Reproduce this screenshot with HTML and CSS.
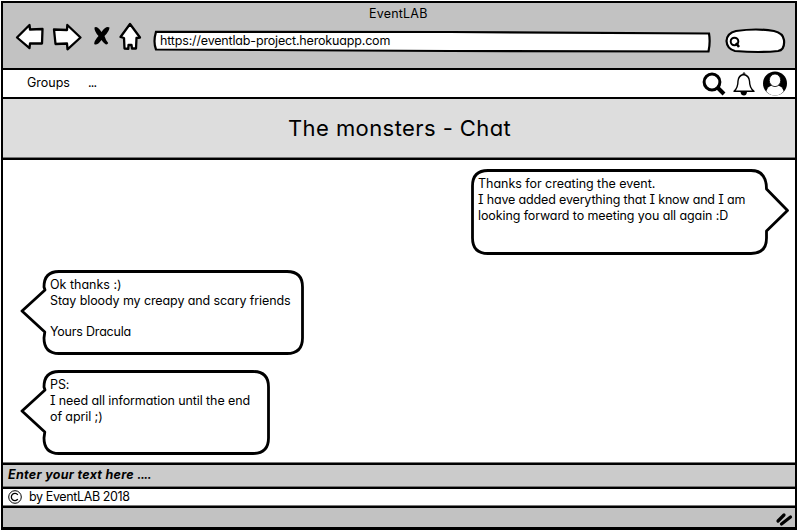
FILE: index.html
```html
<!DOCTYPE html>
<html lang="en">
<head>
<meta charset="utf-8">
<title>EventLAB</title>
<link rel="stylesheet" href="styles.css">
</head>
<body>
<div class="window">
  <header class="chrome">
    <div class="window-title"><span class="t-title">EventLAB</span></div>
    <div class="toolbar">
      <svg class="controls" width="130" height="32" viewBox="14 21 130 32">
        <g fill="#fff" stroke="#000" stroke-width="2.3" stroke-linejoin="round">
          <path d="M17 37.5L29.5 25L30 29.5L42.5 29L42 43.5L30 43.5L29.5 48.2Z"/>
          <path d="M54 29.5L67 30L67.3 25L80.500 37.500L67.5 49.300L67 43.500L55.500 44Z"/>
          <path d="M130 24L120.500 37L124 38L124.500 48.500L128.300 48.800L128.500 45L131.500 45L132 48.500L136 48.500L136.500 38L140 37.500Z"/>
        </g>
        <path d="M94.500 27.500Q97 25.500 101.500 32Q106 25.500 109.500 27.500Q109.500 31 104.500 36Q106 41 108.200 43Q106.500 47 101.500 40Q97 46 94.200 44Q94 41 98.500 36Q94 31 94.500 27.500Z"/>
      </svg>
      <div class="address">
        <svg class="outline" width="560" height="24" viewBox="152 30 560 24"><path d="M156 31.800L450 32L709 33.500Q710.500 42 708.500 51.500L450 51L156 49.500Q153 42 156 31.800Z" fill="#fff" stroke="#000" stroke-width="2.200"/></svg>
        <span class="t-url">https://eventlab-project.herokuapp.com</span>
      </div>
      <svg class="search" width="64" height="28" viewBox="724 27 64 28">
        <path d="M736 31Q757 28 774 31Q783 33 784 40Q785 50 778 51Q760 53 735 51Q727 49 726.500 41Q727 33 736 31Z" fill="#fff" stroke="#000" stroke-width="2.200"/>
        <circle cx="734.500" cy="41.500" r="3.800" fill="none" stroke="#000" stroke-width="2"/><path d="M736 43L739 47" stroke="#000" stroke-width="2.500"/>
      </svg>
    </div>
  </header>
  <nav class="menu">
    <span class="t-groups">Groups</span><span class="t-dots">...</span>
    <svg class="actions" width="90" height="27" viewBox="700 70 90 27">
      <g fill="none" stroke="#000">
        <circle cx="712" cy="82" r="7.900" stroke-width="3"/>
        <path d="M718 88L724 94" stroke-width="4"/>
        <path d="M734 91.300Q738 88 738 81Q738.500 75.500 743.500 74.500Q749 75.500 749.500 81Q749.500 88 754 91.300Z" stroke-width="1.400" stroke-linejoin="round"/>
        <circle cx="744" cy="73.500" r=".8"/>
      </g>
      <path d="M740.500 92H747Q746.500 95.500 744 95.500Q741 95.500 740.500 92Z"/>
      <circle cx="775" cy="83.500" r="12"/>
      <path d="M766.300 91.300Q768 86.300 772 85.500H778Q782 86.300 783.700 91.300A11 11 0 0 1 766.300 91.300Z" fill="#fff"/>
      <ellipse cx="775" cy="80.300" rx="5.700" ry="6.300" fill="#fff" stroke="#000" stroke-width=".8"/>
    </svg>
  </nav>
  <div class="heading"><h1><span class="t-heading">The monsters - Chat</span></h1></div>
  <main class="chat">
    <article class="message mine">
      <svg class="outline" width="320" height="88" viewBox="470 168 320 88"><path d="M488 170.500H751Q766.500 170.500 766.500 189L787.500 210.500L766.500 231V238Q766.500 253.500 751 253.500H488Q472.500 253.500 472.500 238V186Q472.500 170.500 488 170.500Z"/></svg>
      <p><span class="m1">Thanks for creating the event.</span><span class="m2">I have added everything that I know and I am</span><span class="m3">looking forward to meeting you all again :D</span></p>
    </article>
    <article class="message theirs first">
      <svg class="outline" width="286" height="88" viewBox="20 269 286 88"><path d="M59 271.500H287Q302.500 271.500 302.500 287V338Q302.500 353.500 287 353.500H59Q44 353.500 44 338L44.800 332L22 311L45 290L44 287Q44 271.500 59 271.500Z"/></svg>
      <p><span class="m4">Ok thanks :)</span><span class="m5">Stay bloody my creapy and scary friends</span><span class="blank"></span><span class="m6">Yours Dracula</span></p>
    </article>
    <article class="message theirs">
      <svg class="outline" width="286" height="88" viewBox="20 369 286 88"><path d="M59 371.500H253Q268.500 371.500 268.500 387V438Q268.500 453.500 253 453.500H59Q44 453.500 44 438L44.800 432L22 411L45 390L44 387Q44 371.500 59 371.500Z"/></svg>
      <p><span class="m7">PS:</span><span class="m8">I need all information until the end</span><span class="m9">of april ;)</span></p>
    </article>
  </main>
  <div class="composer"><span class="t-enter">Enter your text here <span class="ellipsis">....</span></span></div>
  <footer class="credits">
    <svg width="16" height="16" viewBox="0 0 16 16" fill="none" stroke="#000"><circle cx="8" cy="8" r="6.300"/><path d="M10.800 5.800A3.600 3.600 0 1 0 10.800 10.200" stroke-width="1.300"/></svg>
    <span class="t-by">by EventLAB 2018</span>
  </footer>
  <div class="status">
    <svg width="18" height="16" viewBox="775 510 18 16" stroke="#000" stroke-width="3.200" stroke-linecap="round"><path d="M778 520L784 514M781.500 523L790.500 516"/></svg>
  </div>
</div>
</body>
</html>
```

FILE: styles.css
```css
* { box-sizing: border-box; }
body {
  margin: 0;
  background: #fff;
  color: #000;
  font: 12.5px/16px Inter, "Liberation Sans", sans-serif;
  letter-spacing: -.1px;
  font-feature-settings: "cv11", "cv08", "calt" 0;
}
span { white-space: pre; }
.window {
  display: flex;
  flex-direction: column;
  width: 796px;
  height: 529px;
  margin: 1px 0 0 1px;
  border: 2px solid #000;
  border-bottom-width: 3px;
}
.window > * { flex: none; border-bottom: 2px solid #000; box-shadow: inset 0 -1px #777; }
.chrome { height: 67px; background: #c2c2c2; }
.window > .chrome, .window > .menu { box-shadow: none; }
.window-title { height: 18px; padding: 3px 0 0 366px; letter-spacing: .2px; }
.toolbar { display: flex; align-items: flex-start; padding-left: 11px; }
.controls { margin-right: 8px; }
.address { position: relative; width: 560px; height: 24px; margin-top: 9px; padding: 3px 0 0 8px; }
.address span { position: relative; letter-spacing: -.17px; }
.outline { position: absolute; left: 0; top: 0; }
.search { margin: 6px 0 0 12px; }
.menu { display: flex; height: 29px; padding-left: 24px; letter-spacing: 0; }
.menu span { margin-top: 5px; }
.t-groups { width: 61px; }
.t-dots { letter-spacing: -.8px; }
.actions { margin-left: auto; margin-right: 5px; }
.heading { height: 61px; background: #ddd; }
h1 { margin: 0; padding: 14px 0 0 285px; font-size: 22px; line-height: 30px; font-weight: 400; letter-spacing: .42px; }
.chat { display: flex; flex-direction: column; height: 305px; padding: 8px 5px 0 17px; }
.message { position: relative; height: 88px; }
.message path { fill: #fff; stroke: #000; stroke-width: 2.8; stroke-linejoin: round; }
.message p { position: relative; margin: 0; padding: 8px 0 0 30px; }
.message p span { display: block; width: max-content; height: 16px; }
.m1 { letter-spacing: -.03px; }
.m2 { letter-spacing: -.16px; }
.m4 { letter-spacing: 0; }
.m6 { letter-spacing: -.2px; }
.mine { width: 320px; align-self: flex-end; }
.mine p { padding-left: 8px; }
.theirs { width: 286px; margin-top: 12px; }
.first { margin-top: 13px; }
.message p .blank { height: 15px; }
.composer { height: 24px; padding: 2px 0 0 5px; background: #cbcbcb; font-weight: 700; font-style: italic; letter-spacing: .3px; }
.ellipsis { letter-spacing: -.8px; }
.credits { display: flex; gap: 6px; height: 19px; padding-left: 4px; letter-spacing: -.38px; }
.status { display: flex; justify-content: flex-end; padding: 3px 2px 0 0; background: #c2c2c2; }
.window > .status { border-bottom: 0; flex: 1; box-shadow: none; }
```
